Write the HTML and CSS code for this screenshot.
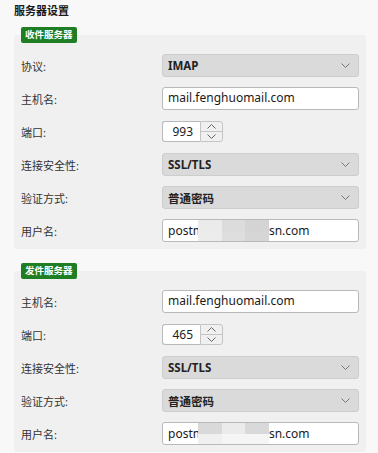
FILE: index.html
```html
<!DOCTYPE html>
<html lang="zh-CN">
<head>
  <meta charset="UTF-8">
  <title>服务器设置</title>
  <link rel="stylesheet" href="styles.css">
</head>
<body>

  <h1>服务器设置</h1>

  <div class="group">
    <span class="badge">收件服务器</span>
    <div class="panel">
      <div class="row">
        <label>协议:</label>
        <div class="select"><b>IMAP</b><svg class="chev" width="9" height="5" viewBox="0 0 9 5"><path d="M0.5 0.5 L4.5 4.5 L8.5 0.5" fill="none" stroke="#777" stroke-width="1"/></svg></div>
      </div>
      <div class="row">
        <label>主机名:</label>
        <div class="input">mail.fenghuomail.com</div>
      </div>
      <div class="row">
        <label>端口:</label>
        <div class="spin">
          <div class="spin-val">993</div>
          <div class="spin-btns">
            <span><svg width="9" height="5" viewBox="0 0 9 5"><path d="M0.5 4.5 L4.5 0.5 L8.5 4.5" fill="none" stroke="#666" stroke-width="1"/></svg></span>
            <span><svg width="9" height="5" viewBox="0 0 9 5"><path d="M0.5 0.5 L4.5 4.5 L8.5 0.5" fill="none" stroke="#666" stroke-width="1"/></svg></span>
          </div>
        </div>
      </div>
      <div class="row">
        <label>连接安全性:</label>
        <div class="select"><b>SSL/TLS</b><svg class="chev" width="9" height="5" viewBox="0 0 9 5"><path d="M0.5 0.5 L4.5 4.5 L8.5 0.5" fill="none" stroke="#777" stroke-width="1"/></svg></div>
      </div>
      <div class="row">
        <label>验证方式:</label>
        <div class="select"><b>普通密码</b><svg class="chev" width="9" height="5" viewBox="0 0 9 5"><path d="M0.5 0.5 L4.5 4.5 L8.5 0.5" fill="none" stroke="#777" stroke-width="1"/></svg></div>
      </div>
      <div class="row">
        <label>用户名:</label>
        <div class="input user">postm<span class="mask one"><i></i><i></i><i></i><i></i><i></i><i></i></span>sn.com</div>
      </div>
    </div>
  </div>

  <div class="group">
    <span class="badge">发件服务器</span>
    <div class="panel">
      <div class="row">
        <label>主机名:</label>
        <div class="input">mail.fenghuomail.com</div>
      </div>
      <div class="row">
        <label>端口:</label>
        <div class="spin">
          <div class="spin-val">465</div>
          <div class="spin-btns">
            <span><svg width="9" height="5" viewBox="0 0 9 5"><path d="M0.5 4.5 L4.5 0.5 L8.5 4.5" fill="none" stroke="#666" stroke-width="1"/></svg></span>
            <span><svg width="9" height="5" viewBox="0 0 9 5"><path d="M0.5 0.5 L4.5 4.5 L8.5 0.5" fill="none" stroke="#666" stroke-width="1"/></svg></span>
          </div>
        </div>
      </div>
      <div class="row">
        <label>连接安全性:</label>
        <div class="select"><b>SSL/TLS</b><svg class="chev" width="9" height="5" viewBox="0 0 9 5"><path d="M0.5 0.5 L4.5 4.5 L8.5 0.5" fill="none" stroke="#777" stroke-width="1"/></svg></div>
      </div>
      <div class="row">
        <label>验证方式:</label>
        <div class="select"><b>普通密码</b><svg class="chev" width="9" height="5" viewBox="0 0 9 5"><path d="M0.5 0.5 L4.5 4.5 L8.5 0.5" fill="none" stroke="#777" stroke-width="1"/></svg></div>
      </div>
      <div class="row">
        <label>用户名:</label>
        <div class="input user">postm<span class="mask two"><i></i><i></i><i></i><i></i><i></i><i></i></span>sn.com</div>
      </div>
    </div>
  </div>

</body>
</html>
```

FILE: styles.css
```css
body {
  font-family: 'Noto Sans', 'Noto Sans CJK SC', sans-serif;
  background: #f8f8f8;
  margin: 0;
  padding: 0 12px 0 14px;
  color: #222;
  font-size: 12px;
}

h1 {
  font-size: 11px;
  font-weight: bold;
  margin: 0;
  height: 20px;
  line-height: 22px;
  color: #1a1a1a;
}

.group {
  margin-top: 7px;
}

.group + .group {
  margin-top: 14px;
}

.badge {
  position: relative;
  z-index: 1;
  display: block;
  width: max-content;
  margin-left: 7px;
  height: 16px;
  line-height: 16px;
  padding: 0 4px;
  background: #1f7d24;
  color: #fff;
  font-size: 9.5px;
  font-weight: bold;
  border-radius: 2px;
}

.panel {
  margin-top: -8px;
  background: #f0f0f0;
  padding: 14px 7px 2px 7px;
  border-radius: 3px;
}

.row {
  display: flex;
  align-items: center;
  height: 33px;
}

.row label {
  width: 141px;
  font-size: 11px;
  color: #333;
}

.select {
  width: 197px;
  height: 23px;
  box-sizing: border-box;
  background: #dadada;
  border: 1px solid #cdcdcd;
  border-radius: 3px;
  display: flex;
  align-items: center;
  justify-content: space-between;
  padding: 0 8px 0 5px;
}

.select b {
  font-size: 11.5px;
  color: #222;
}

.input {
  width: 197px;
  height: 23px;
  box-sizing: border-box;
  background: #fff;
  border: 1px solid #b9b9b9;
  border-radius: 3px;
  padding: 0 5px;
  line-height: 20px;
  font-size: 12px;
  color: #1a1a1a;
  white-space: nowrap;
}

.input.user {
  display: flex;
  align-items: center;
}

.mask {
  width: 71px;
  height: 21px;
  margin-left: -6px;
  display: grid;
  grid-template-columns: repeat(3, 1fr);
  grid-template-rows: repeat(2, 1fr);
}

.mask.one i:nth-child(1) { background: #ebebeb; }
.mask.one i:nth-child(2) { background: #dcdcdc; }
.mask.one i:nth-child(3) { background: #d4d4d4; }
.mask.one i:nth-child(4) { background: #ececec; }
.mask.one i:nth-child(5) { background: #dedede; }
.mask.one i:nth-child(6) { background: #d6d6d6; }

.mask.two i:nth-child(1) { background: #d9d9d9; }
.mask.two i:nth-child(2) { background: #ebebeb; }
.mask.two i:nth-child(3) { background: #d9d9d9; }
.mask.two i:nth-child(4) { background: #f0f0f0; }
.mask.two i:nth-child(5) { background: #f5f5f5; }
.mask.two i:nth-child(6) { background: #f5f5f5; }

.spin {
  display: flex;
  height: 21px;
}

.spin-val {
  width: 38px;
  box-sizing: border-box;
  background: #fff;
  border: 1px solid #b9b9b9;
  border-right: none;
  border-radius: 3px 0 0 3px;
  text-align: right;
  padding-right: 7px;
  line-height: 19px;
  font-size: 12px;
}

.spin-btns {
  width: 23px;
  display: flex;
  flex-direction: column;
  border: 1px solid #c4c4c4;
  border-radius: 0 3px 3px 0;
  background: #f0f0f0;
  box-sizing: border-box;
}

.spin-btns span {
  flex: 1;
  display: flex;
  align-items: center;
  justify-content: center;
}

.spin-btns span + span {
  border-top: 1px solid #c4c4c4;
}
```
